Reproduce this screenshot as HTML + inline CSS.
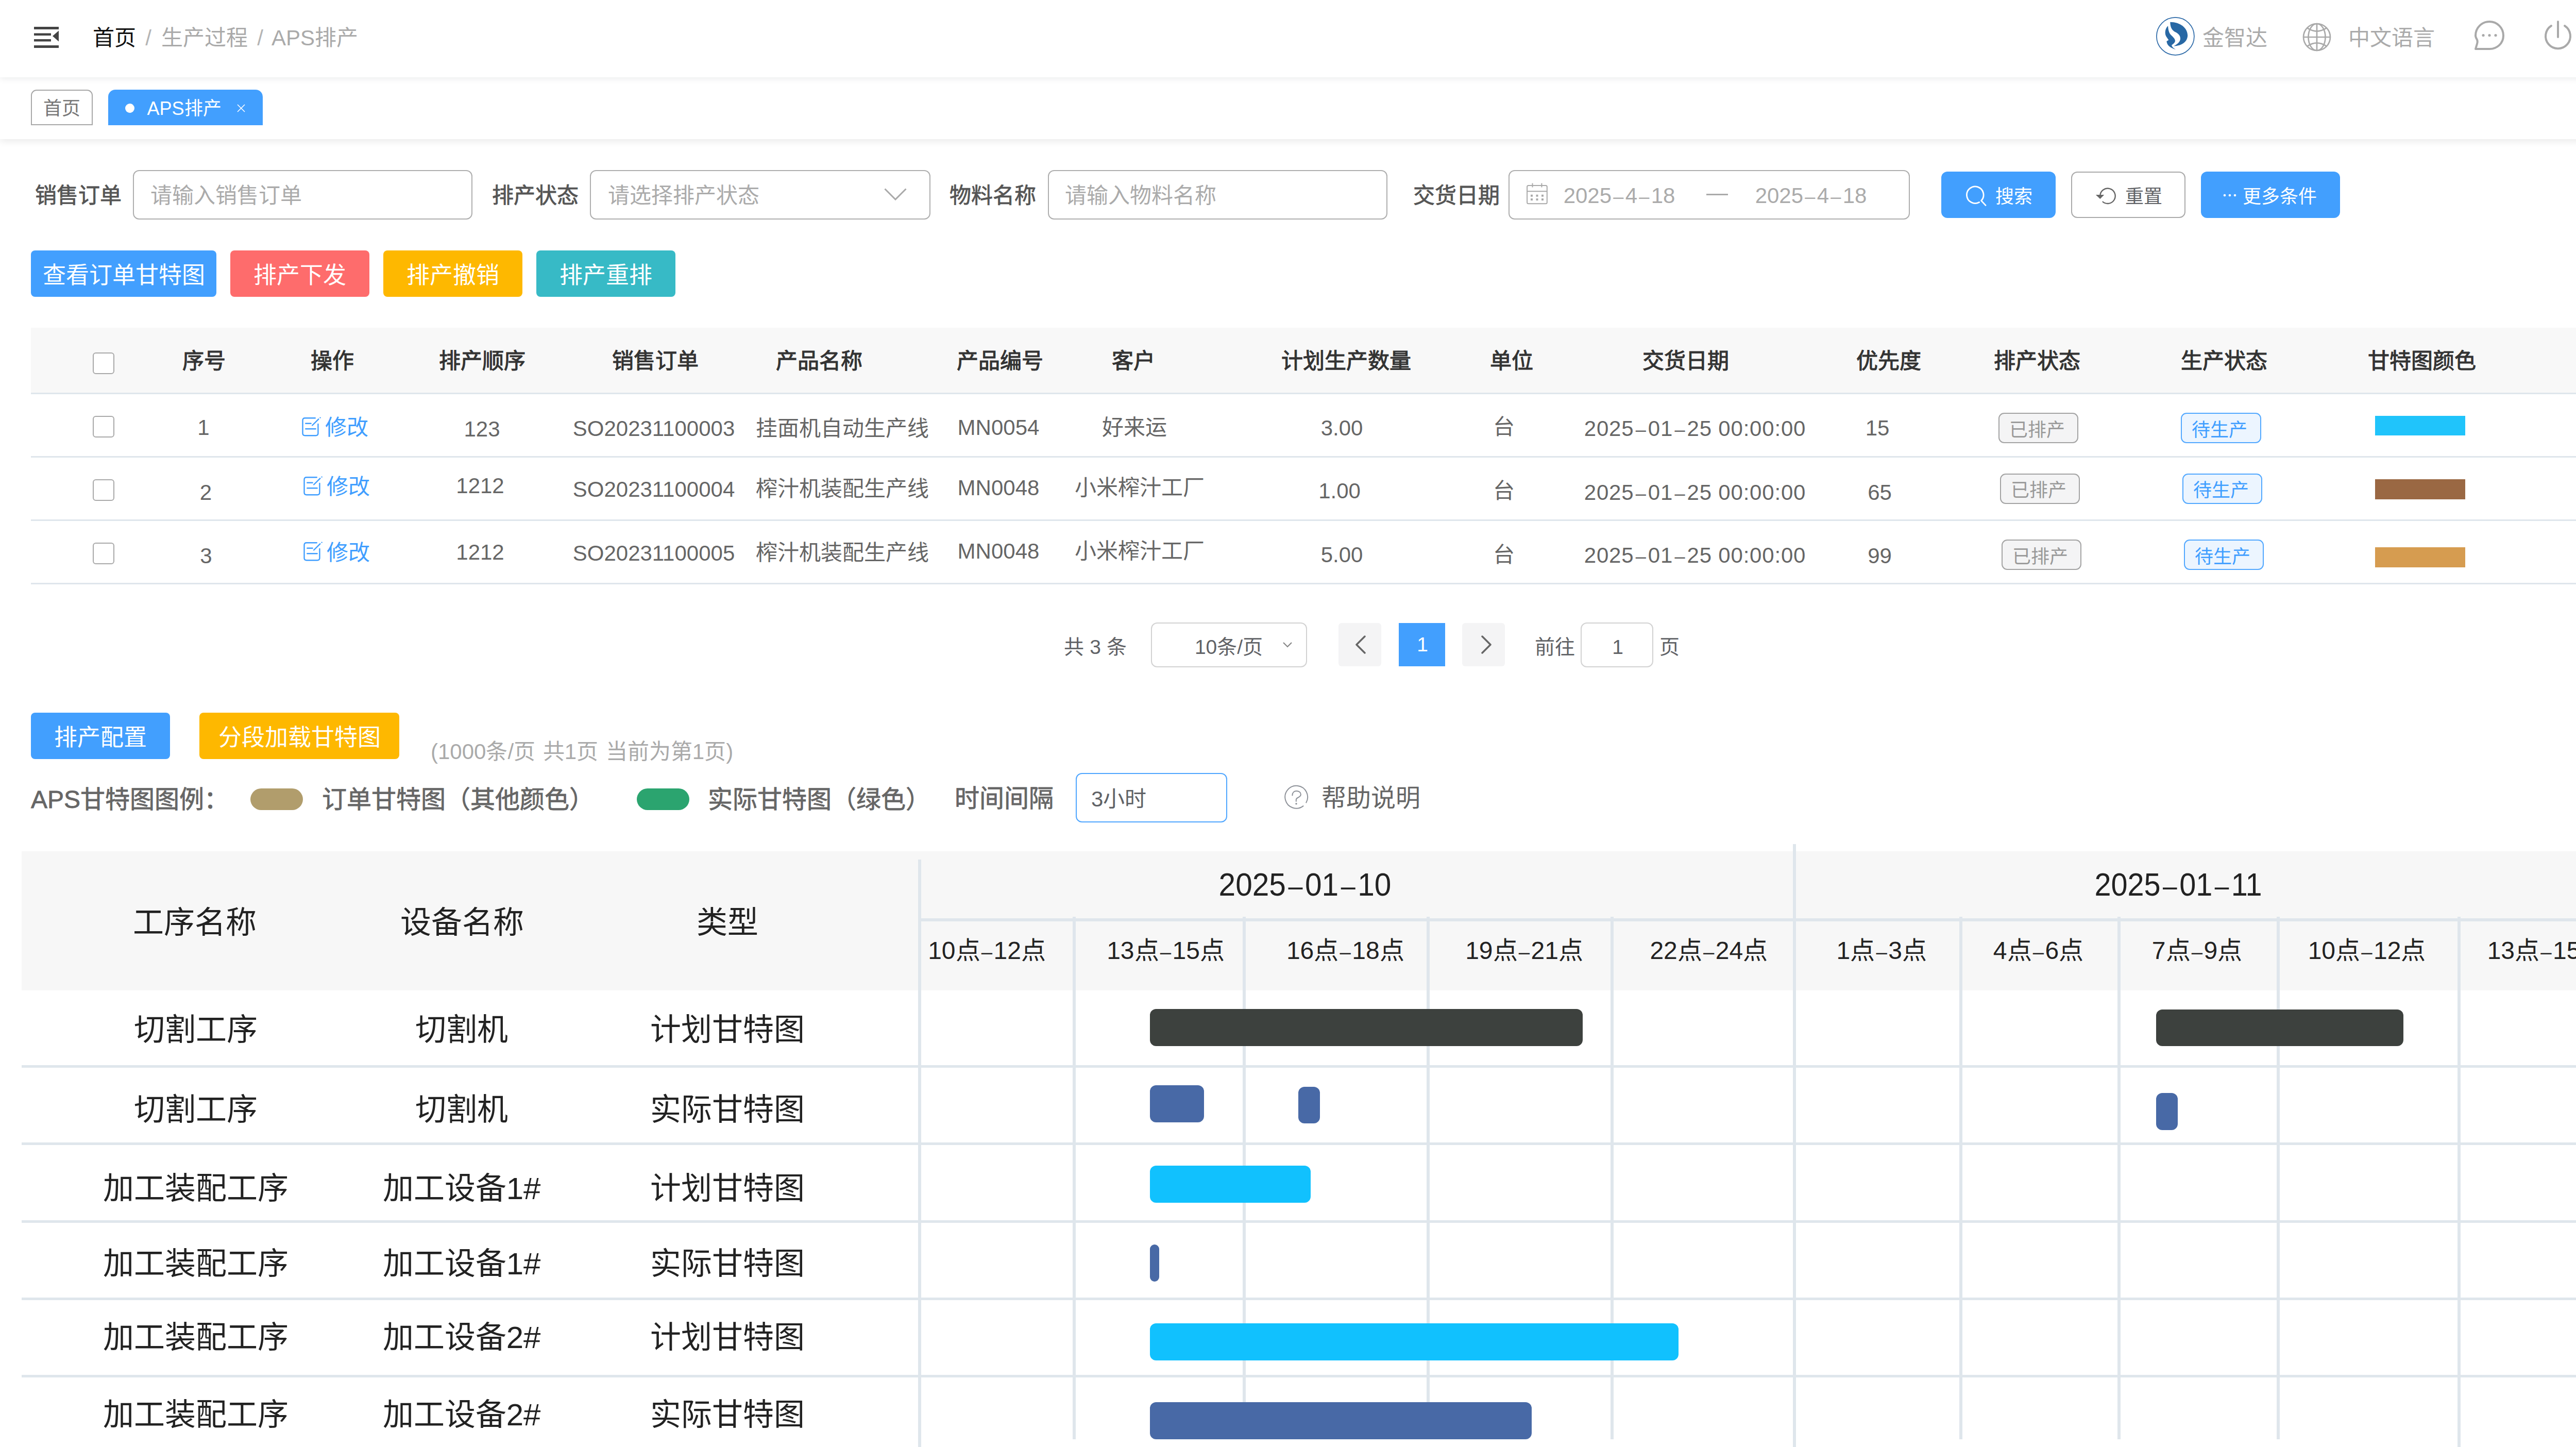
<!DOCTYPE html>
<html lang="zh-CN"><head><meta charset="utf-8"><title>APS排产</title>
<style>
html,body{margin:0;padding:0;background:#fff}
body{width:5160px;height:2808px;overflow:hidden;position:relative;font-family:"Liberation Sans",sans-serif}
.r{position:absolute}
.t{position:absolute;transform:translate(-50%,-50%);white-space:nowrap;line-height:1}
.tl{position:absolute;transform:translateY(-50%);white-space:nowrap;line-height:1}
</style></head><body>
<div class="r" style="left:0px;top:0px;width:5160px;height:150px;background:#fff;box-shadow:0 3px 12px rgba(0,21,41,.08);z-index:2"></div>
<svg class="r" style="left:66px;top:52px;z-index:3" width="48" height="41" viewBox="0 0 48 41"><rect x="0" y="0" width="48" height="5" fill="#444"/><rect x="0" y="12.5" width="33" height="4.5" fill="#444"/><rect x="0" y="24" width="33" height="4.5" fill="#444"/><rect x="0" y="36" width="48" height="5" fill="#444"/><path d="M48 7.5 L36 18 L48 28.5 Z" fill="#444"/></svg>
<div style="position:absolute;z-index:3;left:0;top:0">
<div class="t" style="left:221.5px;top:73.5px;font-size:42px;color:#111;font-weight:400;">首页</div>
<div class="t" style="left:288px;top:73.5px;font-size:42px;color:#b4b4b4;font-weight:400;">/</div>
<div class="t" style="left:396.5px;top:73.5px;font-size:42px;color:#aaaaaa;font-weight:400;">生产过程</div>
<div class="t" style="left:505px;top:73.5px;font-size:42px;color:#b4b4b4;font-weight:400;">/</div>
<div class="t" style="left:611px;top:73.5px;font-size:42px;color:#aaaaaa;font-weight:400;">APS排产</div>
<svg class="r" style="left:4184px;top:32px" width="77" height="77" viewBox="0 0 77 77"><circle cx="38.4" cy="38.4" r="36.5" fill="#fff" stroke="#2d6aa8" stroke-width="1.7"/><path d="M28.3 10.7 C48 11 62 22 62.2 36.7 C62 48 52 57 35 57.4 C44 53 48 48 48 43 C48 37 44 33 39 30.5 C32 27 28.5 22 28.3 10.7 Z" fill="#2868a4"/><path d="M24.1 18.2 C19 23 18.5 29 18.8 33 C19 38 23 42 25.3 45.7 L21.4 48.1 C22 55 26 60 39.1 64.3 C34 61 31 58 31.3 55.3 C35 53 38 50 37.9 46.9 C37.5 43 34 40 30 36 C26 32 24.5 26 24.1 18.2 Z" fill="#2868a4"/></svg>
<div class="t" style="left:4338px;top:73.5px;font-size:42px;color:#aaaaaa;font-weight:400;">金智达</div>
<svg class="r" style="left:4469px;top:44px" width="56" height="56" viewBox="0 0 56 56" fill="none" stroke="#a9a9a9" stroke-width="2.7"><circle cx="28" cy="28" r="26"/><ellipse cx="28" cy="28" rx="16.5" ry="26"/><line x1="28" y1="2" x2="28" y2="54"/><line x1="2" y1="28" x2="54" y2="28"/><path d="M9.7 10.7 Q28 22.5 46.3 10.7"/><path d="M9.7 45.3 Q28 33.5 46.3 45.3"/></svg>
<div class="t" style="left:4642px;top:73.5px;font-size:42px;color:#aaaaaa;font-weight:400;">中文语言</div>
<svg class="r" style="left:4802px;top:39px" width="60" height="60" viewBox="0 0 60 60" fill="none" stroke="#a9a9a9" stroke-width="4" stroke-linejoin="round"><path d="M30 3 C45 3 57 15 57 30 C57 45 45 56 30 56 L3 56 L6 46 C7 43 7 41 6 38 C4 35 3 32 3 30 C3 15 15 3 30 3 Z"/><circle cx="18" cy="29.5" r="2.6" fill="#a9a9a9" stroke="none"/><circle cx="30" cy="29.5" r="2.6" fill="#a9a9a9" stroke="none"/><circle cx="42" cy="29.5" r="2.6" fill="#a9a9a9" stroke="none"/></svg>
<svg class="r" style="left:4937px;top:39px" width="56" height="60" viewBox="0 0 56 60" fill="none" stroke="#a9a9a9" stroke-width="4" stroke-linecap="round"><line x1="28" y1="3" x2="28" y2="33"/><path d="M15 11 A24 24 0 1 0 41 11"/></svg>
<div class="t" style="left:5057px;top:73.5px;font-size:42px;color:#aaaaaa;font-weight:400;">退出</div>
</div>
<div class="r" style="left:0px;top:150px;width:5160px;height:120px;background:#fff;box-shadow:0 4px 14px rgba(0,0,0,.09);z-index:1"></div>
<div style="position:absolute;z-index:3;left:0;top:0">
<div class="r" style="left:60px;top:174px;width:120px;height:69px;border:2px solid #a8a8a8;border-bottom-width:2px;border-radius:11px 11px 0 0;background:#fff;box-sizing:border-box"></div>
<div class="t" style="left:120px;top:210.5px;font-size:36px;color:#777;font-weight:400;">首页</div>
<div class="r" style="left:210px;top:174px;width:300px;height:69px;background:#429ffe;border-radius:14px 14px 0 0"></div>
<div class="r" style="left:243px;top:201px;width:18px;height:18px;background:#fff;border-radius:50%"></div>
<div class="t" style="left:357.5px;top:210.5px;font-size:36px;color:#fff;font-weight:400;">APS排产</div>
<svg class="r" style="left:460px;top:202px" width="16" height="16" viewBox="0 0 16 16" stroke="#fff" stroke-width="1.6"><line x1="1" y1="1" x2="15" y2="15"/><line x1="15" y1="1" x2="1" y2="15"/></svg>
</div>
<div class="tl" style="left:68px;top:379.5px;font-size:42px;color:#555;font-weight:400;-webkit-text-stroke-width:0.8px;">销售订单</div>
<div class="r" style="left:258px;top:330px;width:659px;height:96px;border:2px solid #aeaeae;border-radius:12px;box-sizing:border-box"></div>
<div class="tl" style="left:292px;top:379.5px;font-size:42px;color:#ababab;font-weight:400;">请输入销售订单</div>
<div class="tl" style="left:955px;top:379.5px;font-size:42px;color:#555;font-weight:400;-webkit-text-stroke-width:0.8px;">排产状态</div>
<div class="r" style="left:1145px;top:330px;width:661px;height:96px;border:2px solid #aeaeae;border-radius:12px;box-sizing:border-box"></div>
<div class="tl" style="left:1180px;top:379.5px;font-size:42px;color:#ababab;font-weight:400;">请选择排产状态</div>
<svg class="r" style="left:1716px;top:365px" width="44" height="24" viewBox="0 0 44 24" fill="none" stroke="#a9a9a9" stroke-width="3"><path d="M1.5 1.5 L22 22 L42.5 1.5"/></svg>
<div class="tl" style="left:1843px;top:379.5px;font-size:42px;color:#555;font-weight:400;-webkit-text-stroke-width:0.8px;">物料名称</div>
<div class="r" style="left:2034px;top:330px;width:659px;height:96px;border:2px solid #aeaeae;border-radius:12px;box-sizing:border-box"></div>
<div class="tl" style="left:2067px;top:379.5px;font-size:42px;color:#ababab;font-weight:400;">请输入物料名称</div>
<div class="tl" style="left:2743px;top:379.5px;font-size:42px;color:#555;font-weight:400;-webkit-text-stroke-width:0.8px;">交货日期</div>
<div class="r" style="left:2928px;top:330px;width:779px;height:96px;border:2px solid #aeaeae;border-radius:12px;box-sizing:border-box"></div>
<svg class="r" style="left:2963px;top:355px" width="42" height="42" viewBox="0 0 42 42" fill="none" stroke="#a9a9a9" stroke-width="2"><rect x="1.1" y="5.1" width="38.7" height="35.2" rx="2.5"/><line x1="1.1" y1="16.3" x2="39.8" y2="16.3"/><line x1="11.5" y1="0.5" x2="11.5" y2="8.5"/><line x1="29.4" y1="0.5" x2="29.4" y2="8.5"/><g fill="#a9a9a9" stroke="none"><rect x="8" y="22.7" width="4" height="4"/><rect x="18.5" y="22.7" width="4" height="4"/><rect x="29" y="22.7" width="4" height="4"/><rect x="8" y="30.1" width="4" height="4"/><rect x="18.5" y="30.1" width="4" height="4"/><rect x="29" y="30.1" width="4" height="4"/></g></svg>
<div class="t" style="left:3143px;top:379.5px;font-size:42px;color:#ababab;font-weight:400;">2025<span style="font-size:0.86em;margin:0 0.09em">–</span>4<span style="font-size:0.86em;margin:0 0.09em">–</span>18</div>
<div class="r" style="left:3312px;top:376px;width:42px;height:3px;background:#aaa"></div>
<div class="t" style="left:3515px;top:379.5px;font-size:42px;color:#ababab;font-weight:400;">2025<span style="font-size:0.86em;margin:0 0.09em">–</span>4<span style="font-size:0.86em;margin:0 0.09em">–</span>18</div>
<div class="r" style="left:3768px;top:333px;width:222px;height:90px;background:#429ffe;border-radius:12px"></div>
<svg class="r" style="left:3815px;top:359px" width="42" height="42" viewBox="0 0 42 42" fill="none" stroke="#fff" stroke-width="2.8" stroke-linecap="round" stroke-linejoin="round"><path d="M26.6 33.5 A16.3 16.3 0 1 1 30.6 30.4 L39 39.4"/></svg>
<div class="t" style="left:3909px;top:381.5px;font-size:36px;color:#fff;font-weight:400;">搜索</div>
<div class="r" style="left:4020px;top:333px;width:222px;height:90px;border:2.5px solid #aaa;border-radius:12px;box-sizing:border-box;background:#fff"></div>
<svg class="r" style="left:4067px;top:359px" width="42" height="42" viewBox="0 0 42 42" fill="none" stroke="#666" stroke-width="2.4"><path d="M9.3 21 A14.7 14.7 0 1 1 13.9 32"/><path d="M0.8 19.1 L17.2 19.1 L9.3 27 Z" fill="#666" stroke="none"/></svg>
<div class="t" style="left:4161px;top:381.5px;font-size:36px;color:#606266;font-weight:400;">重置</div>
<div class="r" style="left:4272px;top:333px;width:270px;height:90px;background:#429ffe;border-radius:12px"></div>
<svg class="r" style="left:4312px;top:373px" width="32" height="12" viewBox="0 0 32 12" fill="#fff"><circle cx="6" cy="6" r="2.3"/><circle cx="16" cy="6" r="2.3"/><circle cx="26" cy="6" r="2.3"/></svg>
<div class="t" style="left:4425px;top:381.5px;font-size:36px;color:#fff;font-weight:400;">更多条件</div>
<div class="r" style="left:60px;top:486px;width:360px;height:90px;background:#429ffe;border-radius:8px"></div>
<div class="t" style="left:240.0px;top:533.5px;font-size:45px;color:#fff;font-weight:400;">查看订单甘特图</div>
<div class="r" style="left:447px;top:486px;width:270px;height:90px;background:#fe6c6c;border-radius:8px"></div>
<div class="t" style="left:582.0px;top:533.5px;font-size:45px;color:#fff;font-weight:400;">排产下发</div>
<div class="r" style="left:744px;top:486px;width:270px;height:90px;background:#feb800;border-radius:8px"></div>
<div class="t" style="left:879.0px;top:533.5px;font-size:45px;color:#fff;font-weight:400;">排产撤销</div>
<div class="r" style="left:1041px;top:486px;width:270px;height:90px;background:#37bac6;border-radius:8px"></div>
<div class="t" style="left:1176.0px;top:533.5px;font-size:45px;color:#fff;font-weight:400;">排产重排</div>
<div class="r" style="left:60px;top:636px;width:5100px;height:128px;background:#f8f8f8"></div>
<div class="r" style="left:60px;top:762px;width:5100px;height:3px;background:#dfe6ec"></div>
<div class="r" style="left:60px;top:885px;width:5100px;height:3px;background:#dfe6ec"></div>
<div class="r" style="left:60px;top:1008px;width:5100px;height:3px;background:#dfe6ec"></div>
<div class="r" style="left:60px;top:1131px;width:5100px;height:3px;background:#dfe6ec"></div>
<div class="r" style="left:180px;top:684px;width:42px;height:42px;border:2px solid #a9a9a9;border-radius:6px;box-sizing:border-box;background:#fff"></div>
<div class="t" style="left:395.5px;top:700.5px;font-size:42px;color:#333;font-weight:400;-webkit-text-stroke-width:1.1px;">序号</div>
<div class="t" style="left:644.5px;top:700.5px;font-size:42px;color:#333;font-weight:400;-webkit-text-stroke-width:1.1px;">操作</div>
<div class="t" style="left:935.5px;top:700.5px;font-size:42px;color:#333;font-weight:400;-webkit-text-stroke-width:1.1px;">排产顺序</div>
<div class="t" style="left:1272px;top:700.5px;font-size:42px;color:#333;font-weight:400;-webkit-text-stroke-width:1.1px;">销售订单</div>
<div class="t" style="left:1589.5px;top:700.5px;font-size:42px;color:#333;font-weight:400;-webkit-text-stroke-width:1.1px;">产品名称</div>
<div class="t" style="left:1940.5px;top:700.5px;font-size:42px;color:#333;font-weight:400;-webkit-text-stroke-width:1.1px;">产品编号</div>
<div class="t" style="left:2200px;top:700.5px;font-size:42px;color:#333;font-weight:400;-webkit-text-stroke-width:1.1px;">客户</div>
<div class="t" style="left:2612.5px;top:700.5px;font-size:42px;color:#333;font-weight:400;-webkit-text-stroke-width:1.1px;">计划生产数量</div>
<div class="t" style="left:2934px;top:700.5px;font-size:42px;color:#333;font-weight:400;-webkit-text-stroke-width:1.1px;">单位</div>
<div class="t" style="left:3272px;top:700.5px;font-size:42px;color:#333;font-weight:400;-webkit-text-stroke-width:1.1px;">交货日期</div>
<div class="t" style="left:3665.5px;top:700.5px;font-size:42px;color:#333;font-weight:400;-webkit-text-stroke-width:1.1px;">优先度</div>
<div class="t" style="left:3954px;top:700.5px;font-size:42px;color:#333;font-weight:400;-webkit-text-stroke-width:1.1px;">排产状态</div>
<div class="t" style="left:4317px;top:700.5px;font-size:42px;color:#333;font-weight:400;-webkit-text-stroke-width:1.1px;">生产状态</div>
<div class="t" style="left:4700.5px;top:700.5px;font-size:42px;color:#333;font-weight:400;-webkit-text-stroke-width:1.1px;">甘特图颜色</div>
<div class="tl" style="left:5006px;top:700.5px;font-size:42px;color:#333;font-weight:400;-webkit-text-stroke-width:1.1px;">工序名称</div>
<div class="r" style="left:180px;top:806.5px;width:42px;height:42.0px;border:2px solid #a9a9a9;border-radius:6px;box-sizing:border-box;background:#fff"></div>
<div class="t" style="left:395px;top:829.5px;font-size:42px;color:#666;font-weight:400;">1</div>
<div class="t" style="left:935.5px;top:832.5px;font-size:42px;color:#666;font-weight:400;">123</div>
<div class="t" style="left:1269px;top:831.5px;font-size:42px;color:#666;font-weight:400;">SO20231100003</div>
<div class="t" style="left:1634.5px;top:831.5px;font-size:42px;color:#666;font-weight:400;">挂面机自动生产线</div>
<div class="t" style="left:1938px;top:829.5px;font-size:42px;color:#666;font-weight:400;">MN0054</div>
<div class="t" style="left:2202px;top:829.5px;font-size:42px;color:#666;font-weight:400;">好来运</div>
<div class="t" style="left:2604.5px;top:830.5px;font-size:42px;color:#666;font-weight:400;">3.00</div>
<div class="t" style="left:2919px;top:829.0px;font-size:42px;color:#666;font-weight:400;">台</div>
<div class="t" style="left:3290px;top:831.5px;font-size:42px;color:#666;font-weight:400;letter-spacing:0.8px;">2025<span style="font-size:0.86em;margin:0 0.09em">–</span>01<span style="font-size:0.86em;margin:0 0.09em">–</span>25 00:00:00</div>
<div class="t" style="left:3644px;top:830.5px;font-size:42px;color:#666;font-weight:400;">15</div>
<svg class="r" style="left:586px;top:808.5px" width="40" height="40" viewBox="0 0 40 40" fill="none" stroke="#409eff" stroke-width="2.4" stroke-linecap="round"><path d="M25.8 2.2 L6 2.2 Q1.5 2.2 1.5 6.5 L1.5 32 Q1.5 36.2 6 36.2 L27 36.2 Q31.4 36.2 31.4 32 L31.4 14"/><line x1="7.3" y1="12.7" x2="17.6" y2="12.7"/><line x1="7.3" y1="23.3" x2="26.6" y2="23.3"/><line x1="20.1" y1="16.5" x2="32.3" y2="4.3"/><circle cx="35.6" cy="1.6" r="1.2" fill="#409eff" stroke="none"/></svg>
<div class="tl" style="left:631px;top:830.0px;font-size:42px;color:#409eff;font-weight:400;">修改</div>
<div class="r" style="left:3879px;top:801.0px;width:155px;height:59.0px;background:#f4f4f5;border:2px solid #a3a3a3;border-radius:11px;box-sizing:border-box"></div>
<div class="t" style="left:3953.5px;top:834.5px;font-size:36px;color:#999;font-weight:400;">已排产</div>
<div class="r" style="left:4233px;top:801.0px;width:156px;height:59.0px;background:#ecf5ff;border:2px solid #52a8ff;border-radius:11px;box-sizing:border-box"></div>
<div class="t" style="left:4308.0px;top:834.5px;font-size:36px;color:#409eff;font-weight:400;">待生产</div>
<div class="r" style="left:4610px;top:807px;width:175px;height:38px;background:#20c4fb"></div>
<div class="tl" style="left:5008px;top:831.5px;font-size:42px;color:#666;font-weight:400;">挂面机</div>
<div class="r" style="left:180px;top:930px;width:42px;height:42px;border:2px solid #a9a9a9;border-radius:6px;box-sizing:border-box;background:#fff"></div>
<div class="t" style="left:399.5px;top:955.5px;font-size:42px;color:#666;font-weight:400;">2</div>
<div class="t" style="left:932px;top:942.5px;font-size:42px;color:#666;font-weight:400;">1212</div>
<div class="t" style="left:1269px;top:949.5px;font-size:42px;color:#666;font-weight:400;">SO20231100004</div>
<div class="t" style="left:1634.5px;top:949.0px;font-size:42px;color:#666;font-weight:400;">榨汁机装配生产线</div>
<div class="t" style="left:1938px;top:946.5px;font-size:42px;color:#666;font-weight:400;">MN0048</div>
<div class="t" style="left:2212px;top:947.0px;font-size:42px;color:#666;font-weight:400;">小米榨汁工厂</div>
<div class="t" style="left:2600px;top:952.5px;font-size:42px;color:#666;font-weight:400;">1.00</div>
<div class="t" style="left:2919px;top:952.5px;font-size:42px;color:#666;font-weight:400;">台</div>
<div class="t" style="left:3290px;top:955.5px;font-size:42px;color:#666;font-weight:400;letter-spacing:0.8px;">2025<span style="font-size:0.86em;margin:0 0.09em">–</span>01<span style="font-size:0.86em;margin:0 0.09em">–</span>25 00:00:00</div>
<div class="t" style="left:3648.5px;top:955.5px;font-size:42px;color:#666;font-weight:400;">65</div>
<svg class="r" style="left:589px;top:923.5px" width="40" height="40" viewBox="0 0 40 40" fill="none" stroke="#409eff" stroke-width="2.4" stroke-linecap="round"><path d="M25.8 2.2 L6 2.2 Q1.5 2.2 1.5 6.5 L1.5 32 Q1.5 36.2 6 36.2 L27 36.2 Q31.4 36.2 31.4 32 L31.4 14"/><line x1="7.3" y1="12.7" x2="17.6" y2="12.7"/><line x1="7.3" y1="23.3" x2="26.6" y2="23.3"/><line x1="20.1" y1="16.5" x2="32.3" y2="4.3"/><circle cx="35.6" cy="1.6" r="1.2" fill="#409eff" stroke="none"/></svg>
<div class="tl" style="left:634px;top:945.0px;font-size:42px;color:#409eff;font-weight:400;">修改</div>
<div class="r" style="left:3882px;top:918.5px;width:155px;height:59.0px;background:#f4f4f5;border:2px solid #a3a3a3;border-radius:11px;box-sizing:border-box"></div>
<div class="t" style="left:3956.5px;top:952.0px;font-size:36px;color:#999;font-weight:400;">已排产</div>
<div class="r" style="left:4236px;top:918.5px;width:155px;height:59.0px;background:#ecf5ff;border:2px solid #52a8ff;border-radius:11px;box-sizing:border-box"></div>
<div class="t" style="left:4310.5px;top:952.0px;font-size:36px;color:#409eff;font-weight:400;">待生产</div>
<div class="r" style="left:4610px;top:930px;width:175px;height:39px;background:#9a6843"></div>
<div class="tl" style="left:5008px;top:952.5px;font-size:42px;color:#666;font-weight:400;">榨汁机</div>
<div class="r" style="left:180px;top:1053px;width:42px;height:42px;border:2px solid #a9a9a9;border-radius:6px;box-sizing:border-box;background:#fff"></div>
<div class="t" style="left:400px;top:1079.0px;font-size:42px;color:#666;font-weight:400;">3</div>
<div class="t" style="left:932px;top:1072.0px;font-size:42px;color:#666;font-weight:400;">1212</div>
<div class="t" style="left:1269px;top:1074.0px;font-size:42px;color:#666;font-weight:400;">SO20231100005</div>
<div class="t" style="left:1634.5px;top:1072.5px;font-size:42px;color:#666;font-weight:400;">榨汁机装配生产线</div>
<div class="t" style="left:1938px;top:1069.5px;font-size:42px;color:#666;font-weight:400;">MN0048</div>
<div class="t" style="left:2212px;top:1069.5px;font-size:42px;color:#666;font-weight:400;">小米榨汁工厂</div>
<div class="t" style="left:2604.5px;top:1076.5px;font-size:42px;color:#666;font-weight:400;">5.00</div>
<div class="t" style="left:2919px;top:1076.5px;font-size:42px;color:#666;font-weight:400;">台</div>
<div class="t" style="left:3290px;top:1077.5px;font-size:42px;color:#666;font-weight:400;letter-spacing:0.8px;">2025<span style="font-size:0.86em;margin:0 0.09em">–</span>01<span style="font-size:0.86em;margin:0 0.09em">–</span>25 00:00:00</div>
<div class="t" style="left:3648.5px;top:1078.5px;font-size:42px;color:#666;font-weight:400;">99</div>
<svg class="r" style="left:589px;top:1051px" width="40" height="40" viewBox="0 0 40 40" fill="none" stroke="#409eff" stroke-width="2.4" stroke-linecap="round"><path d="M25.8 2.2 L6 2.2 Q1.5 2.2 1.5 6.5 L1.5 32 Q1.5 36.2 6 36.2 L27 36.2 Q31.4 36.2 31.4 32 L31.4 14"/><line x1="7.3" y1="12.7" x2="17.6" y2="12.7"/><line x1="7.3" y1="23.3" x2="26.6" y2="23.3"/><line x1="20.1" y1="16.5" x2="32.3" y2="4.3"/><circle cx="35.6" cy="1.6" r="1.2" fill="#409eff" stroke="none"/></svg>
<div class="tl" style="left:634px;top:1072.5px;font-size:42px;color:#409eff;font-weight:400;">修改</div>
<div class="r" style="left:3885px;top:1047.0px;width:155px;height:59.0px;background:#f4f4f5;border:2px solid #a3a3a3;border-radius:11px;box-sizing:border-box"></div>
<div class="t" style="left:3959.5px;top:1080.5px;font-size:36px;color:#999;font-weight:400;">已排产</div>
<div class="r" style="left:4239px;top:1047.0px;width:155px;height:59.0px;background:#ecf5ff;border:2px solid #52a8ff;border-radius:11px;box-sizing:border-box"></div>
<div class="t" style="left:4313.5px;top:1080.5px;font-size:36px;color:#409eff;font-weight:400;">待生产</div>
<div class="r" style="left:4610px;top:1062px;width:175px;height:39px;background:#d69c50"></div>
<div class="tl" style="left:5008px;top:1076.0px;font-size:42px;color:#666;font-weight:400;">榨汁机</div>
<div class="t" style="left:2126px;top:1254.5px;font-size:39px;color:#606266;font-weight:400;">共 3 条</div>
<div class="r" style="left:2234px;top:1208px;width:303px;height:87px;border:2px solid #d2d2d2;border-radius:12px;box-sizing:border-box"></div>
<div class="t" style="left:2385px;top:1254.5px;font-size:39px;color:#606266;font-weight:400;">10条/页</div>
<svg class="r" style="left:2490px;top:1246px" width="18" height="11" viewBox="0 0 18 11" fill="none" stroke="#888" stroke-width="2.2"><path d="M1 1 L9 9 L17 1"/></svg>
<div class="r" style="left:2598px;top:1209px;width:83px;height:84px;background:#f4f4f5;border-radius:6px"></div>
<svg class="r" style="left:2630px;top:1233px" width="22" height="36" viewBox="0 0 22 36" fill="none" stroke="#666" stroke-width="3.5" stroke-linecap="round" stroke-linejoin="round"><path d="M19 2 L3 18 L19 34"/></svg>
<div class="r" style="left:2715px;top:1209px;width:90px;height:84px;background:#429ffe"></div>
<div class="t" style="left:2761px;top:1249.5px;font-size:39px;color:#fff;font-weight:400;">1</div>
<div class="r" style="left:2838px;top:1209px;width:83px;height:84px;background:#f4f4f5;border-radius:6px"></div>
<svg class="r" style="left:2874px;top:1233px" width="22" height="36" viewBox="0 0 22 36" fill="none" stroke="#666" stroke-width="3.5" stroke-linecap="round" stroke-linejoin="round"><path d="M3 2 L19 18 L3 34"/></svg>
<div class="t" style="left:3017.5px;top:1254.5px;font-size:39px;color:#606266;font-weight:400;">前往</div>
<div class="r" style="left:3068px;top:1208px;width:141px;height:87px;border:2px solid #d2d2d2;border-radius:12px;box-sizing:border-box"></div>
<div class="t" style="left:3140px;top:1254.5px;font-size:39px;color:#606266;font-weight:400;">1</div>
<div class="t" style="left:3240px;top:1254.5px;font-size:39px;color:#606266;font-weight:400;">页</div>
<div class="r" style="left:60px;top:1383px;width:270px;height:90px;background:#429ffe;border-radius:8px"></div>
<div class="t" style="left:195.0px;top:1430.5px;font-size:45px;color:#fff;font-weight:400;">排产配置</div>
<div class="r" style="left:387px;top:1383px;width:388px;height:90px;background:#feb800;border-radius:8px"></div>
<div class="t" style="left:581.0px;top:1430.5px;font-size:45px;color:#fff;font-weight:400;">分段加载甘特图</div>
<div class="tl" style="left:836px;top:1458.5px;font-size:42px;color:#aaaaaa;font-weight:400;word-spacing:3px;">(1000条/页 共1页 当前为第1页)</div>
<div class="tl" style="left:60px;top:1551.5px;font-size:48px;color:#666;font-weight:400;-webkit-text-stroke-width:0.8px;">APS甘特图图例：</div>
<div class="r" style="left:486px;top:1530px;width:102px;height:42px;background:#b19d6c;border-radius:21px"></div>
<div class="tl" style="left:625px;top:1551.5px;font-size:48px;color:#666;font-weight:400;-webkit-text-stroke-width:0.8px;">订单甘特图（其他颜色）</div>
<div class="r" style="left:1236px;top:1530px;width:102px;height:42px;background:#2ba46f;border-radius:21px"></div>
<div class="tl" style="left:1374px;top:1551.5px;font-size:48px;color:#666;font-weight:400;-webkit-text-stroke-width:0.8px;">实际甘特图（绿色）</div>
<div class="tl" style="left:1853px;top:1549.5px;font-size:48px;color:#666;font-weight:400;-webkit-text-stroke-width:0.8px;">时间间隔</div>
<div class="r" style="left:2088px;top:1500px;width:294px;height:96px;border:2px solid #4fa6ff;border-radius:12px;box-sizing:border-box"></div>
<div class="tl" style="left:2118px;top:1550.5px;font-size:42px;color:#606266;font-weight:400;">3小时</div>
<svg class="r" style="left:2492px;top:1523px" width="48" height="48" viewBox="0 0 48 48" fill="none" stroke="#8e9299" stroke-width="2" stroke-linecap="round"><path d="M37.5 41.1 A21.9 21.9 0 1 1 43.3 34.4"/><path d="M16.4 20.5 C16.4 15 20 12 24.5 12 C29 12 32.9 14.5 32.9 18.5 C32.9 22 29.5 23.8 27 25 C24.5 26.2 23.8 27.5 23.8 29 L23.8 32"/><circle cx="24" cy="36.7" r="1.7" fill="#8e9299" stroke="none"/></svg>
<div class="tl" style="left:2565px;top:1548.5px;font-size:48px;color:#666;font-weight:400;">帮助说明</div>
<div class="r" style="left:42px;top:1652px;width:5040px;height:270px;background:#f7f7f7"></div>
<div class="t" style="left:378px;top:1790.5px;font-size:60px;color:#222;font-weight:400;">工序名称</div>
<div class="t" style="left:897px;top:1790.5px;font-size:60px;color:#222;font-weight:400;">设备名称</div>
<div class="t" style="left:1412px;top:1790.5px;font-size:60px;color:#222;font-weight:400;">类型</div>
<div class="r" style="left:1788px;top:1782px;width:3294px;height:6px;background:#dfe6ec"></div>
<div class="r" style="left:42px;top:2067px;width:5022px;height:5px;background:#dfe6ec"></div>
<div class="r" style="left:42px;top:2217px;width:5022px;height:5px;background:#dfe6ec"></div>
<div class="r" style="left:42px;top:2368px;width:5022px;height:5px;background:#dfe6ec"></div>
<div class="r" style="left:42px;top:2518px;width:5022px;height:5px;background:#dfe6ec"></div>
<div class="r" style="left:42px;top:2668px;width:5022px;height:5px;background:#dfe6ec"></div>
<div class="r" style="left:1782px;top:1668px;width:6px;height:1140px;background:#dfe6ec"></div>
<div class="r" style="left:3480px;top:1638px;width:6px;height:1170px;background:#dfe6ec"></div>
<div class="r" style="left:2082px;top:1779px;width:6px;height:1014px;background:#dfe6ec"></div>
<div class="r" style="left:2412px;top:1779px;width:6px;height:1014px;background:#dfe6ec"></div>
<div class="r" style="left:2769px;top:1779px;width:6px;height:1014px;background:#dfe6ec"></div>
<div class="r" style="left:3126px;top:1779px;width:6px;height:1014px;background:#dfe6ec"></div>
<div class="r" style="left:3803px;top:1779px;width:6px;height:1014px;background:#dfe6ec"></div>
<div class="r" style="left:4110px;top:1779px;width:6px;height:1014px;background:#dfe6ec"></div>
<div class="r" style="left:4419px;top:1779px;width:6px;height:1014px;background:#dfe6ec"></div>
<div class="r" style="left:4770px;top:1779px;width:6px;height:1029px;background:#dfe6ec"></div>
<div class="t" style="left:2532.5px;top:1715.5px;font-size:63px;color:#222;font-weight:400;transform:translate(-50%,-50%) scaleX(0.93);">2025<span style="font-size:0.86em;margin:0 0.09em">–</span>01<span style="font-size:0.86em;margin:0 0.09em">–</span>10</div>
<div class="t" style="left:4227.5px;top:1715.5px;font-size:63px;color:#222;font-weight:400;transform:translate(-50%,-50%) scaleX(0.915);">2025<span style="font-size:0.86em;margin:0 0.09em">–</span>01<span style="font-size:0.86em;margin:0 0.09em">–</span>11</div>
<div class="t" style="left:1915.5px;top:1844.5px;font-size:48px;color:#222;font-weight:400;">10点<span style="font-size:0.8em;margin:0 0.06em">–</span>12点</div>
<div class="t" style="left:2262.5px;top:1844.5px;font-size:48px;color:#222;font-weight:400;">13点<span style="font-size:0.8em;margin:0 0.06em">–</span>15点</div>
<div class="t" style="left:2611.25px;top:1844.5px;font-size:48px;color:#222;font-weight:400;">16点<span style="font-size:0.8em;margin:0 0.06em">–</span>18点</div>
<div class="t" style="left:2958.5px;top:1844.5px;font-size:48px;color:#222;font-weight:400;">19点<span style="font-size:0.8em;margin:0 0.06em">–</span>21点</div>
<div class="t" style="left:3316.75px;top:1844.5px;font-size:48px;color:#222;font-weight:400;">22点<span style="font-size:0.8em;margin:0 0.06em">–</span>24点</div>
<div class="t" style="left:3652.25px;top:1844.5px;font-size:48px;color:#222;font-weight:400;">1点<span style="font-size:0.8em;margin:0 0.06em">–</span>3点</div>
<div class="t" style="left:3956.5px;top:1844.5px;font-size:48px;color:#222;font-weight:400;">4点<span style="font-size:0.8em;margin:0 0.06em">–</span>6点</div>
<div class="t" style="left:4264.5px;top:1844.5px;font-size:48px;color:#222;font-weight:400;">7点<span style="font-size:0.8em;margin:0 0.06em">–</span>9点</div>
<div class="t" style="left:4594.0px;top:1844.5px;font-size:48px;color:#222;font-weight:400;">10点<span style="font-size:0.8em;margin:0 0.06em">–</span>12点</div>
<div class="t" style="left:4942.0px;top:1844.5px;font-size:48px;color:#222;font-weight:400;">13点<span style="font-size:0.8em;margin:0 0.06em">–</span>15点</div>
<div class="t" style="left:380px;top:1999.0px;font-size:60px;color:#222;font-weight:400;">切割工序</div>
<div class="t" style="left:896px;top:1999.0px;font-size:60px;color:#222;font-weight:400;">切割机</div>
<div class="t" style="left:1412px;top:1999.0px;font-size:60px;color:#222;font-weight:400;">计划甘特图</div>
<div class="t" style="left:380px;top:2153.5px;font-size:60px;color:#222;font-weight:400;">切割工序</div>
<div class="t" style="left:896px;top:2153.5px;font-size:60px;color:#222;font-weight:400;">切割机</div>
<div class="t" style="left:1412px;top:2153.5px;font-size:60px;color:#222;font-weight:400;">实际甘特图</div>
<div class="t" style="left:380px;top:2306.5px;font-size:60px;color:#222;font-weight:400;">加工装配工序</div>
<div class="t" style="left:896px;top:2306.5px;font-size:60px;color:#222;font-weight:400;">加工设备1#</div>
<div class="t" style="left:1412px;top:2306.5px;font-size:60px;color:#222;font-weight:400;">计划甘特图</div>
<div class="t" style="left:380px;top:2452.5px;font-size:60px;color:#222;font-weight:400;">加工装配工序</div>
<div class="t" style="left:896px;top:2452.5px;font-size:60px;color:#222;font-weight:400;">加工设备1#</div>
<div class="t" style="left:1412px;top:2452.5px;font-size:60px;color:#222;font-weight:400;">实际甘特图</div>
<div class="t" style="left:380px;top:2596.0px;font-size:60px;color:#222;font-weight:400;">加工装配工序</div>
<div class="t" style="left:896px;top:2596.0px;font-size:60px;color:#222;font-weight:400;">加工设备2#</div>
<div class="t" style="left:1412px;top:2596.0px;font-size:60px;color:#222;font-weight:400;">计划甘特图</div>
<div class="t" style="left:380px;top:2746.0px;font-size:60px;color:#222;font-weight:400;">加工装配工序</div>
<div class="t" style="left:896px;top:2746.0px;font-size:60px;color:#222;font-weight:400;">加工设备2#</div>
<div class="t" style="left:1412px;top:2746.0px;font-size:60px;color:#222;font-weight:400;">实际甘特图</div>
<div class="r" style="left:2232px;top:1958px;width:840px;height:72px;background:#3d413e;border-radius:12px"></div>
<div class="r" style="left:4185px;top:1959px;width:480px;height:71px;background:#3d413e;border-radius:12px"></div>
<div class="r" style="left:2232px;top:2106px;width:105px;height:72px;background:#4869a6;border-radius:12px"></div>
<div class="r" style="left:2520px;top:2109px;width:42px;height:71px;background:#4869a6;border-radius:12px"></div>
<div class="r" style="left:4185px;top:2121px;width:42px;height:72px;background:#4869a6;border-radius:12px"></div>
<div class="r" style="left:2232px;top:2262px;width:312px;height:72px;background:#11c1fe;border-radius:12px"></div>
<div class="r" style="left:2232px;top:2415px;width:18px;height:72px;background:#4869a6;border-radius:9.0px"></div>
<div class="r" style="left:2232px;top:2568px;width:1026px;height:72px;background:#11c1fe;border-radius:12px"></div>
<div class="r" style="left:2232px;top:2721px;width:741px;height:72px;background:#4869a6;border-radius:12px"></div>
</body></html>
